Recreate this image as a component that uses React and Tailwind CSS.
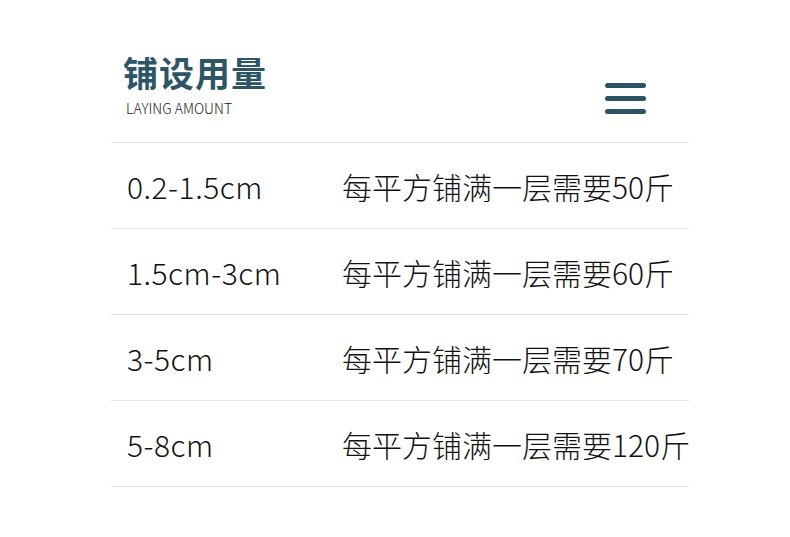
const rows = [
    ["0.2-1.5cm", "每平方铺满一层需要50斤"],
    ["1.5cm-3cm", "每平方铺满一层需要60斤"],
    ["3-5cm", "每平方铺满一层需要70斤"],
    ["5-8cm", "每平方铺满一层需要120斤"],
];

const App = () => {
    return (
        <div className="w-[790px] h-[537px] bg-white overflow-hidden font-['Noto_Sans_CJK_SC',sans-serif]">
            <div className="ml-[111px] w-[578px] pt-[54px]">
                {/* Header */}
                <div className="flex items-start justify-between h-[89px] border-b border-[#e3e3e3]">
                    <div className="pl-[12px]">
                        <h1 className="text-[35px] leading-none font-bold text-[#2c5666] tracking-[1px]">铺设用量</h1>
                        <p className="mt-[12px] ml-[3px] text-[14px] leading-none font-light text-[#222] whitespace-nowrap">LAYING AMOUNT</p>
                    </div>
                    <div className="mr-[43px] mt-[29px] flex flex-col gap-[8.5px]">
                        <span className="block w-[41px] h-[4.5px] rounded-full bg-[#2a5564]"></span>
                        <span className="block w-[41px] h-[4.5px] rounded-full bg-[#2a5564]"></span>
                        <span className="block w-[41px] h-[4.5px] rounded-full bg-[#2a5564]"></span>
                    </div>
                </div>

                {/* Rows */}
                {rows.map(([range, amount]) => (
                    <div key={range} className="flex items-center h-[86px] border-b border-[#e3e3e3] text-[30px] leading-none font-light text-[#111] whitespace-nowrap">
                        <span className="w-[231px] shrink-0 pl-[16px] tracking-[0.5px]">{range}</span>
                        <span>{amount}</span>
                    </div>
                ))}
            </div>
        </div>
    );
};

export default App;
